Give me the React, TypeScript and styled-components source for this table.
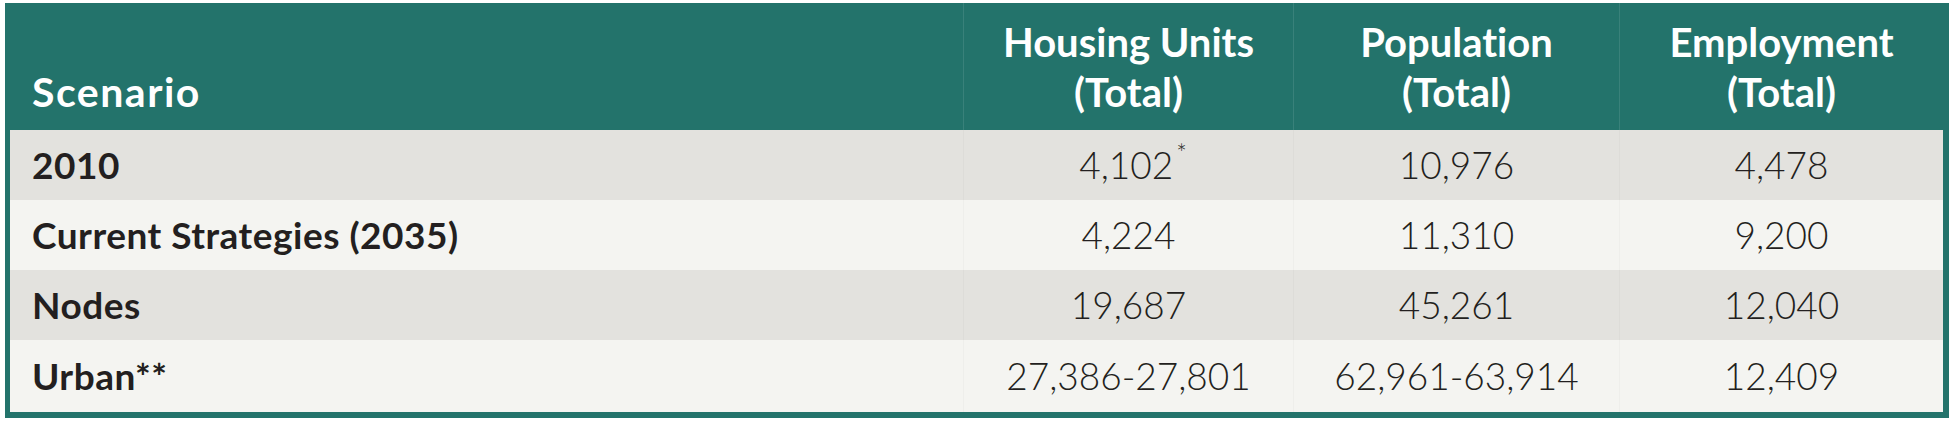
import styled, { createGlobalStyle } from 'styled-components';

const GlobalStyle = createGlobalStyle`
  html, body {
    margin: 0;
    padding: 0;
    background: #ffffff;
  }
`;

const TEAL = '#23736b';

const Page = styled.div`
  padding: 3px 7px 10px 5px;
`;

const Table = styled.div`
  display: grid;
  grid-template-columns: 953px 330px 326px 324px;
  width: 1933px;
  border-left: 5px solid ${TEAL};
  border-right: 6px solid ${TEAL};
  border-bottom: 6px solid ${TEAL};
  font-family: Lato, "Liberation Sans", sans-serif;
  font-variant-ligatures: none;
`;

const HeadCell = styled.div<{ $first?: boolean }>`
  height: 127px;
  box-sizing: border-box;
  display: flex;
  flex-direction: column;
  justify-content: flex-end;
  align-items: ${(p) => (p.$first ? 'flex-start' : 'center')};
  text-align: ${(p) => (p.$first ? 'left' : 'center')};
  padding: 0 0 13px ${(p) => (p.$first ? '22px' : '0')};
  background: ${TEAL};
  color: #ffffff;
  font-weight: 700;
  font-size: ${(p) => (p.$first ? '41px' : '40px')};
  line-height: 50px;
  letter-spacing: ${(p) => (p.$first ? '1.5px' : '0')};
  border-left: ${(p) => (p.$first ? 'none' : '1px solid rgba(255,255,255,0.1)')};
`;

const Cell = styled.div<{ $shade: boolean; $label?: boolean; $tall?: boolean }>`
  height: ${(p) => (p.$tall ? '72px' : '70px')};
  box-sizing: border-box;
  display: flex;
  align-items: center;
  justify-content: ${(p) => (p.$label ? 'flex-start' : 'center')};
  padding-left: ${(p) => (p.$label ? '22px' : '0')};
  background: ${(p) => (p.$shade ? '#e3e2de' : '#f4f4f1')};
  color: #231f20;
  font-size: 37px;
  font-weight: ${(p) => (p.$label ? 700 : 300)};
  letter-spacing: ${(p) => (p.$label ? '0.5px' : '0')};
  line-height: 70px;
  white-space: nowrap;
  border-left: ${(p) => (p.$label ? 'none' : '1px solid rgba(0,0,0,0.025)')};
`;

const Note = styled.span`
  font-size: 25px;
  line-height: 0;
  position: relative;
  top: -12px;
  margin-left: 3px;
  margin-right: -9px;
`;

type Row = { label: string; values: [string, string, string]; starred?: boolean };

const rows: Row[] = [
  { label: '2010', values: ['4,102', '10,976', '4,478'], starred: true },
  { label: 'Current Strategies (2035)', values: ['4,224', '11,310', '9,200'] },
  { label: 'Nodes', values: ['19,687', '45,261', '12,040'] },
  { label: 'Urban**', values: ['27,386-27,801', '62,961-63,914', '12,409'] },
];

export default function App() {
  return (
    <>
      <GlobalStyle />
      <Page>
        <Table>
          <HeadCell $first>Scenario</HeadCell>
          <HeadCell>
            <span>Housing Units</span>
            <span>(Total)</span>
          </HeadCell>
          <HeadCell>
            <span>Population</span>
            <span>(Total)</span>
          </HeadCell>
          <HeadCell>
            <span>Employment</span>
            <span>(Total)</span>
          </HeadCell>

          {rows.map((r, i) => {
            const shade = i % 2 === 0;
            const tall = i === rows.length - 1;
            return [
              <Cell key={`${r.label}-l`} $shade={shade} $label $tall={tall}>
                {r.label}
              </Cell>,
              ...r.values.map((v, j) => (
                <Cell key={`${r.label}-${j}`} $shade={shade} $tall={tall}>
                  {v}
                  {r.starred && j === 0 && <Note>*</Note>}
                </Cell>
              )),
            ];
          })}
        </Table>
      </Page>
    </>
  );
}
